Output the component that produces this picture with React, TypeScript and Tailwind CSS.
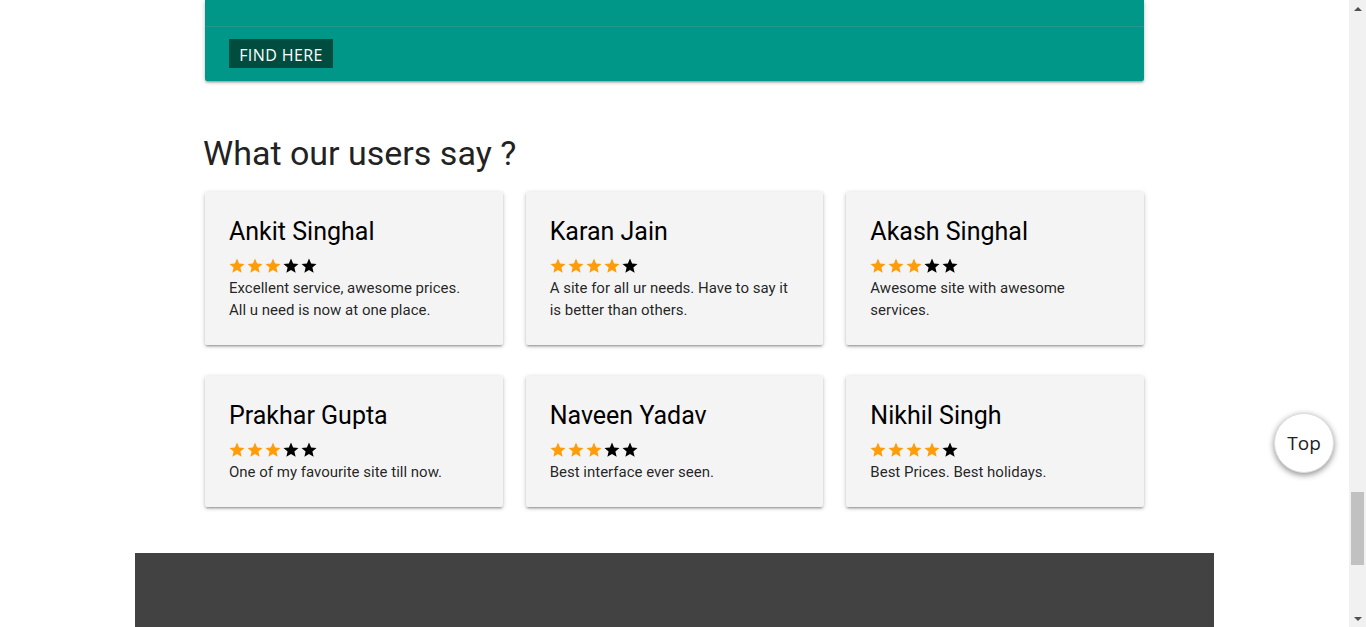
import React from "react";

type Review = { name: string; rating: number; text: string };

const reviews: Review[] = [
  { name: "Ankit Singhal", rating: 3, text: "Excellent service, awesome prices. All u need is now at one place." },
  { name: "Karan Jain", rating: 4, text: "A site for all ur needs. Have to say it is better than others." },
  { name: "Akash Singhal", rating: 3, text: "Awesome site with awesome services." },
  { name: "Prakhar Gupta", rating: 3, text: "One of my favourite site till now." },
  { name: "Naveen Yadav", rating: 3, text: "Best interface ever seen." },
  { name: "Nikhil Singh", rating: 4, text: "Best Prices. Best holidays." },
];

function Stars({ rating }: { rating: number }) {
  return (
    <div className="mt-[9px] flex h-[18px] -ml-[1px]">
      {[1, 2, 3, 4, 5].map((i) => (
        <svg
          key={i}
          viewBox="0 0 24 24"
          className={`h-[18px] w-[18px] ${i <= rating ? "text-[#ff9c0a]" : "text-black"}`}
          fill="currentColor"
        >
          <path d="M12 17.27L18.18 21l-1.64-7.03L22 9.24l-7.19-.61L12 2 9.19 8.63 2 9.24l5.46 4.73L5.82 21z" />
        </svg>
      ))}
    </div>
  );
}

function ReviewCard({ r }: { r: Review }) {
  return (
    <div className="rounded-[2px] bg-[#f4f4f4] p-6 shadow-[0_2px_2px_0_rgba(0,0,0,0.14),0_3px_1px_-2px_rgba(0,0,0,0.12),0_1px_5px_0_rgba(0,0,0,0.2)]">
      <div className="h-8 text-[25px] leading-8 text-black">{r.name}</div>
      <Stars rating={r.rating} />
      <p className="mt-[2px] text-[15px] leading-[22px] text-[rgba(0,0,0,0.87)]">{r.text}</p>
    </div>
  );
}

function Scrollbar() {
  return (
    <div className="flex h-[627px] w-[17px] shrink-0 flex-col bg-[#f1f1f1]">
      <div className="flex h-[17px] items-center justify-center">
        <div className="h-0 w-0 border-x-[4px] border-b-[4px] border-x-transparent border-b-[#505050]" />
      </div>
      <div className="flex-1 px-[2px]">
        <div className="mt-[475px] h-[73px] bg-[#c1c1c1]" />
      </div>
      <div className="flex h-[17px] items-center justify-center">
        <div className="h-0 w-0 border-x-[4px] border-t-[4px] border-x-transparent border-t-[#505050]" />
      </div>
    </div>
  );
}

export default function App() {
  return (
    <div className="flex h-[627px] w-[1366px] overflow-hidden bg-white font-['Roboto',sans-serif]">
      <main className="relative h-[627px] w-[1349px] shrink-0 overflow-hidden">
        <div className="mx-auto w-[939px]">
          <div className="rounded-b-[2px] bg-[#009688] shadow-[0_2px_2px_0_rgba(0,0,0,0.14),0_3px_1px_-2px_rgba(0,0,0,0.12),0_1px_5px_0_rgba(0,0,0,0.2)]">
            <div className="h-[26px]" />
            <div className="border-t border-[rgba(160,160,160,0.2)] px-6 pt-3 pb-[13px]">
              <button className="flex h-[29px] w-[104px] items-center justify-center bg-[#004d40] pt-[2px] font-['Open_Sans',sans-serif] text-[16px] font-medium leading-none tracking-[0.4px] text-white">
                FIND HERE
              </button>
            </div>
          </div>

          <h2 className="-ml-[2px] mt-[50px] text-[34px] leading-[44px] text-[#222]">What our users say ?</h2>

          <div className="mt-[17px] grid grid-cols-3 gap-x-[23px] gap-y-[31px]">
            {reviews.map((r) => (
              <ReviewCard key={r.name} r={r} />
            ))}
          </div>
        </div>

        <footer className="mx-auto mt-[46px] h-[120px] w-[1079px] bg-[#424242]" />

        <button className="absolute right-[15px] top-[413px] flex h-[60px] w-[60px] items-center justify-center rounded-full border border-[#ddd] bg-white font-['Open_Sans',sans-serif] text-[19px] text-[#222] shadow-[0_2px_6px_rgba(0,0,0,0.45)]">
          Top
        </button>
      </main>
      <Scrollbar />
    </div>
  );
}
